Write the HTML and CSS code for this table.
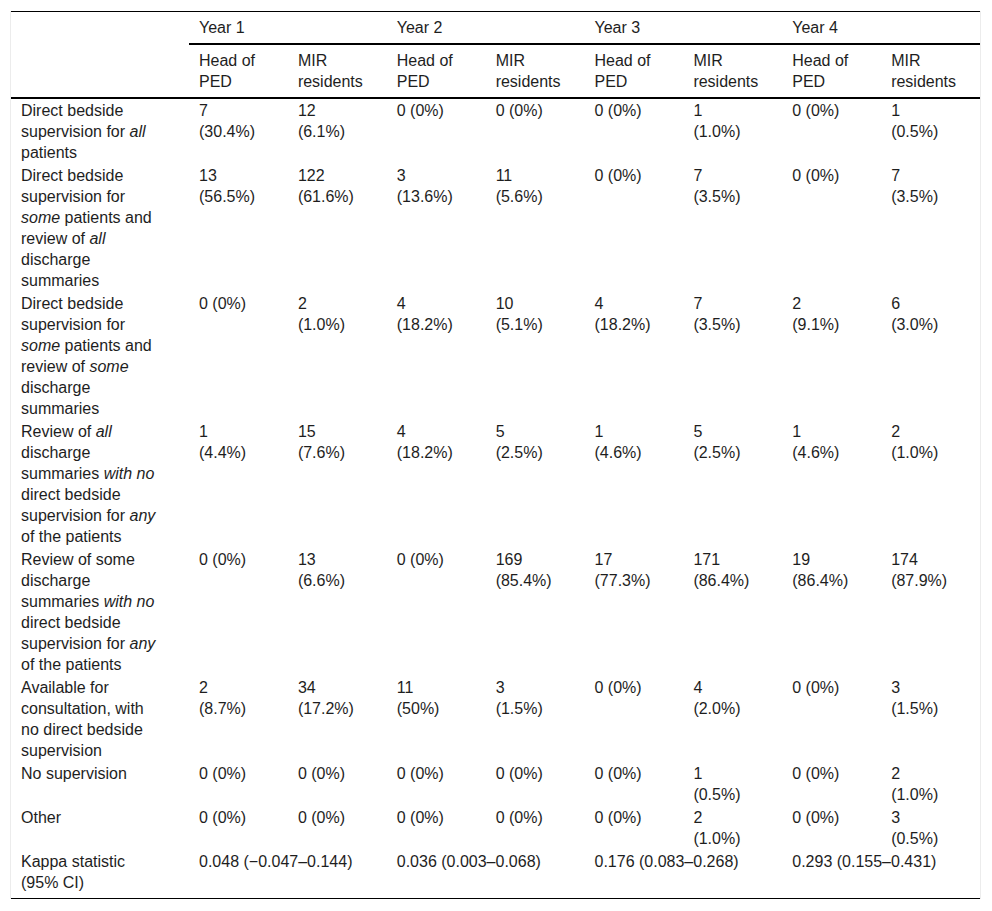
FILE: index.html
```html
<!DOCTYPE html>
<html lang="en">
<head>
<meta charset="utf-8">
<title>Supervision table</title>
<link rel="stylesheet" href="styles.css">
</head>
<body>
<div class="wrap">
<table class="tbl">
<colgroup>
<col class="c-label">
<col class="c-data"><col class="c-data"><col class="c-data"><col class="c-data">
<col class="c-data"><col class="c-data"><col class="c-data"><col class="c-data">
</colgroup>
<thead>
<tr class="yr-row">
<th class="label-head" rowspan="2"></th>
<th class="yr" colspan="2">Year 1</th>
<th class="yr" colspan="2">Year 2</th>
<th class="yr" colspan="2">Year 3</th>
<th class="yr" colspan="2">Year 4</th>
</tr>
<tr class="sub-row">
<th class="sub">Head of<br>PED</th><th class="sub">MIR<br>residents</th>
<th class="sub">Head of<br>PED</th><th class="sub">MIR<br>residents</th>
<th class="sub">Head of<br>PED</th><th class="sub">MIR<br>residents</th>
<th class="sub">Head of<br>PED</th><th class="sub">MIR<br>residents</th>
</tr>
</thead>
<tbody>
<tr>
<td class="label">Direct bedside supervision for <i>all</i> patients</td>
<td>7<br>(30.4%)</td><td>12<br>(6.1%)</td>
<td>0 (0%)</td><td>0 (0%)</td>
<td>0 (0%)</td><td>1<br>(1.0%)</td>
<td>0 (0%)</td><td>1<br>(0.5%)</td>
</tr>
<tr>
<td class="label">Direct bedside supervision for <i>some</i> patients and review of <i>all</i> discharge summaries</td>
<td>13<br>(56.5%)</td><td>122<br>(61.6%)</td>
<td>3<br>(13.6%)</td><td>11<br>(5.6%)</td>
<td>0 (0%)</td><td>7<br>(3.5%)</td>
<td>0 (0%)</td><td>7<br>(3.5%)</td>
</tr>
<tr>
<td class="label">Direct bedside supervision for <i>some</i> patients and review of <i>some</i> discharge summaries</td>
<td>0 (0%)</td><td>2<br>(1.0%)</td>
<td>4<br>(18.2%)</td><td>10<br>(5.1%)</td>
<td>4<br>(18.2%)</td><td>7<br>(3.5%)</td>
<td>2<br>(9.1%)</td><td>6<br>(3.0%)</td>
</tr>
<tr>
<td class="label">Review of <i>all</i> discharge summaries <i>with no</i> direct bedside supervision for <i>any</i> of the patients</td>
<td>1<br>(4.4%)</td><td>15<br>(7.6%)</td>
<td>4<br>(18.2%)</td><td>5<br>(2.5%)</td>
<td>1<br>(4.6%)</td><td>5<br>(2.5%)</td>
<td>1<br>(4.6%)</td><td>2<br>(1.0%)</td>
</tr>
<tr>
<td class="label">Review of some discharge summaries <i>with no</i> direct bedside supervision for <i>any</i> of the patients</td>
<td>0 (0%)</td><td>13<br>(6.6%)</td>
<td>0 (0%)</td><td>169<br>(85.4%)</td>
<td>17<br>(77.3%)</td><td>171<br>(86.4%)</td>
<td>19<br>(86.4%)</td><td>174<br>(87.9%)</td>
</tr>
<tr>
<td class="label">Available for consultation, with no direct bedside supervision</td>
<td>2<br>(8.7%)</td><td>34<br>(17.2%)</td>
<td>11<br>(50%)</td><td>3<br>(1.5%)</td>
<td>0 (0%)</td><td>4<br>(2.0%)</td>
<td>0 (0%)</td><td>3<br>(1.5%)</td>
</tr>
<tr>
<td class="label">No supervision</td>
<td>0 (0%)</td><td>0 (0%)</td>
<td>0 (0%)</td><td>0 (0%)</td>
<td>0 (0%)</td><td>1<br>(0.5%)</td>
<td>0 (0%)</td><td>2<br>(1.0%)</td>
</tr>
<tr>
<td class="label">Other</td>
<td>0 (0%)</td><td>0 (0%)</td>
<td>0 (0%)</td><td>0 (0%)</td>
<td>0 (0%)</td><td>2<br>(1.0%)</td>
<td>0 (0%)</td><td>3<br>(0.5%)</td>
</tr>
<tr class="last">
<td class="label">Kappa statistic (95% CI)</td>
<td colspan="2">0.048 (&minus;0.047&ndash;0.144)</td>
<td colspan="2">0.036 (0.003&ndash;0.068)</td>
<td colspan="2">0.176 (0.083&ndash;0.268)</td>
<td colspan="2">0.293 (0.155&ndash;0.431)</td>
</tr>
</tbody>
</table>
</div>
</body>
</html>
```

FILE: styles.css
```css
html, body {
  margin: 0;
  padding: 0;
  background: #ffffff;
}

body {
  font-family: "Liberation Sans", Arial, sans-serif;
  font-size: 16px;
  line-height: 21px;
  color: #1e1e1e;
}

.wrap {
  margin: 11px 11px 0 10px;
  border-left: 1px solid #ececec;
  border-right: 1px solid #ececec;
}

.tbl {
  width: 100%;
  table-layout: fixed;
  border-collapse: separate;
  border-spacing: 0;
  border-top: 1px solid #000000;
  border-bottom: 1px solid #000000;
}

.c-label {
  width: 178px;
}

.tbl th,
.tbl td {
  text-align: left;
  vertical-align: top;
  font-weight: normal;
  padding: 1px 4px 1px 10px;
}

.tbl th.label-head {
  border-bottom: 2px solid #000000;
  padding: 0;
}

.tbl th.yr {
  padding-top: 5px;
  padding-bottom: 5px;
  border-bottom: 2px solid #000000;
}

.tbl th.sub {
  padding-top: 5px;
  padding-bottom: 5px;
  border-bottom: 2px solid #000000;
}

.tbl td.label {
  padding-right: 28px;
}

.tbl tr.last td {
  padding-bottom: 5px;
}

.tbl i {
  font-style: italic;
}
```
